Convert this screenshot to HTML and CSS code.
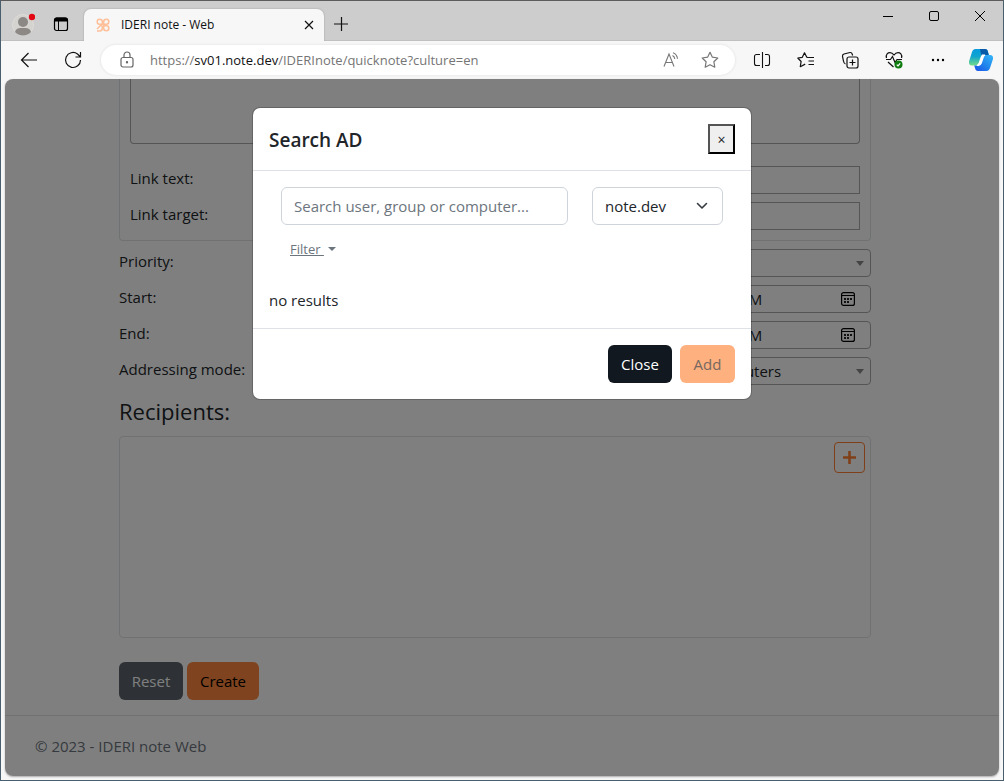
FILE: index.html
```html
<!DOCTYPE html>
<html lang="en">
<head>
<meta charset="utf-8">
<title>IDERI note - Web</title>
<link rel="stylesheet" href="styles.css">
</head>
<body>
<div class="window">
  <header class="titlebar">
    <button class="profile" aria-label="Profile">
      <svg width="24" height="24" viewBox="0 0 24 24"><circle cx="12" cy="13" r="10.500" fill="#d5d3d0" stroke="#dedcd8"/><circle cx="12" cy="10" r="5" fill="#8b8886"/><path d="M4 20c1-4 4-4 8-4s7 0 8 4c-2 2-4.500 3.500-8 3.500S6 22 4 20z" fill="#8b8886"/><circle cx="21" cy="5" r="3.200" fill="#e30613"/></svg>
    </button>
    <button class="tabmenu" aria-label="Tab actions">
      <svg width="16" height="16" viewBox="0 0 16 16" fill="none" stroke="#000"><rect x="1.500" y="2" width="13" height="12.500" rx="2" stroke-width="1.200"/><path d="M1.500 5V4a2 2 0 0 1 2-2h9a2 2 0 0 1 2 2v1z" fill="#000"/><path d="M5.500 5v9"/></svg>
    </button>
    <div class="tab">
      <svg width="16" height="16" viewBox="0 0 16 16" fill="none" stroke="#ffbf98" stroke-width="1.500"><path d="M7.300 7.300H4.500q-2.300 0-2.300-2.500T4.500 2.300q2.800 0 2.800 2.500zM8.700 7.300V4.800q0-2.500 2.800-2.500 2.300 0 2.300 2.500t-2.300 2.500zM8.700 8.700h2.800q2.300 0 2.300 2.500t-2.300 2.500q-2.800 0-2.800-2.500zM7.300 8.700v2.500q0 2.800-2.800 2.800H2M2 12l3.300-3.300h2"/></svg>
      <span class="tab-title">IDERI note - Web</span>
      <button class="tab-close" aria-label="Close tab"><svg width="10" height="10" viewBox="0 0 10 10" stroke="#111" stroke-width="1.200"><path d="M1 1l8 8M9 1L1 9"/></svg></button>
    </div>
    <button class="newtab" aria-label="New tab"><svg width="16" height="16" viewBox="0 0 16 16" stroke="#111" stroke-width="1.200"><path d="M8.500 1v14M1 8h14"/></svg></button>
    <div class="winctl">
      <button aria-label="Minimize"><svg width="12" height="12" viewBox="0 0 12 12" stroke="#000"><path d="M1 6.500h10"/></svg></button>
      <button aria-label="Maximize"><svg width="12" height="12" viewBox="0 0 12 12" fill="none" stroke="#000"><rect x="1.500" y="1.500" width="9" height="9" rx="1.500"/></svg></button>
      <button aria-label="Close window"><svg width="12" height="12" viewBox="0 0 12 12" stroke="#000"><path d="M1 1l10 10M11 1L1 11"/></svg></button>
    </div>
  </header>

  <nav class="toolbar">
    <button aria-label="Back"><svg width="18" height="18" viewBox="0 0 18 18" fill="none" stroke="#111" stroke-width="1.200"><path d="M17 9H1.500M8.500 2l-7 7 7 7"/></svg></button>
    <button aria-label="Refresh"><svg width="18" height="18" viewBox="0 0 18 18" fill="none" stroke="#111" stroke-width="1.200"><path d="M16.500 9A7.500 7.500 0 1 1 13.500 3L16 5.500M16.500 1v5h-5"/></svg></button>
    <div class="address">
      <svg width="16" height="18" viewBox="0 0 16 18" fill="none" stroke="#666" stroke-width="1.200"><rect x="2" y="6.500" width="12" height="9.500" rx="2"/><path d="M5 6.500V4a3 3 0 0 1 6 0v2.500"/><circle cx="8" cy="11.300" r=".6" fill="#666"/></svg>
      <span class="url">https://<b>sv01.note.dev</b>/IDERInote/quicknote?culture=en</span>
      <button aria-label="Read aloud"><svg width="18" height="18" viewBox="0 0 18 18" fill="none" stroke="#777" stroke-width="1.100"><path d="M2 15.500L7 3l5 12.500M3.800 11.500h6.400M10.500 4.500q2 1 2.300 3.500M11 1.800q4 1.500 4.500 6"/></svg></button>
      <button aria-label="Favorite"><svg width="18" height="18" viewBox="0 0 18 18" fill="none" stroke="#777" stroke-width="1.200" stroke-linejoin="round"><path d="M9 1.300l2.400 4.900 5.400.8-3.900 3.800.9 5.400L9 13.700l-4.800 2.500.9-5.400L1.200 7l5.400-.8z"/></svg></button>
    </div>
    <div class="tools">
      <button aria-label="Split screen"><svg width="18" height="18" viewBox="0 0 18 18" fill="none" stroke="#111" stroke-width="1.100"><path d="M9.500 1v16M7 3.500H3.500a2 2 0 0 0-2 2v7a2 2 0 0 0 2 2H7M12 3.500h2.500a2 2 0 0 1 2 2v7a2 2 0 0 1-2 2H12"/></svg></button>
      <button aria-label="Favorites"><svg width="18" height="18" viewBox="0 0 18 18" fill="none" stroke="#111" stroke-width="1.200" stroke-linejoin="round"><path d="M10.500 6.500H17M11.500 10H17M11.500 13.500H17M10.500 6.300l-.7-.1L7.500 1.800 5.300 6.300l-4.500.7 3.300 3.500-.8 5.200 4.900-2.600"/></svg></button>
      <button aria-label="Collections"><svg width="18" height="18" viewBox="0 0 18 18" fill="none" stroke="#111" stroke-width="1.200"><rect x="6" y="6" width="11" height="11" rx="2"/><path d="M11.500 8.500v6M8.500 11.500h6M4.500 13C3 12.500 2.700 11.500 2.500 10L1.500 5.500q-.3-2 1.500-2.500L9 1.500q1.800-.2 2.200 1.500l.4 1.500"/></svg></button>
      <button aria-label="Browser essentials"><svg width="18" height="18" viewBox="0 0 18 18" fill="none" stroke="#111" stroke-width="1.200"><path d="M1.500 7C.5 3 3 1.700 5 1.700c2 0 3 1 4 2.300 1-1.300 2-2.300 4-2.300 2 0 4.500 1.300 3.500 5.300M1 8.500h4.500l2-3 2.500 6 2-3h5M3 11l5.500 5"/><circle cx="13.500" cy="13.500" r="4" fill="#107c10" stroke="none"/><path d="M11.800 13.600l1.200 1.200 2.200-2.500" stroke="#fff"/></svg></button>
      <button aria-label="More"><svg width="18" height="18" viewBox="0 0 18 18" fill="#000"><circle cx="4" cy="9" r="1.200"/><circle cx="9" cy="9" r="1.200"/><circle cx="14" cy="9" r="1.200"/></svg></button>
      <button class="copilot" aria-label="Copilot"><svg width="26" height="26" viewBox="0 0 26 26"><defs><linearGradient id="ca" x1="0" y1="0" x2="0" y2="1"><stop offset="0" stop-color="#099adf"/><stop offset=".45" stop-color="#10a4cf"/><stop offset="1" stop-color="#74dc87"/></linearGradient><linearGradient id="cb" x1="1" y1="0" x2="0" y2="1"><stop offset="0" stop-color="#35b7f7"/><stop offset=".5" stop-color="#2187ed"/><stop offset="1" stop-color="#1a50e8"/></linearGradient></defs><path d="M7.500 2H17q2.500 0 3 3l.8 3h-4.300q-2 0-2.800 2L11 16.500q-.8 2-3 2H4q-3.500 0-3-4L4 5Q5 2 7.500 2z" fill="url(#ca)"/><path d="M12 2h5q2.500 0 3 3l.8 3h-4.300q-2 0-2.800 2z" fill="#075aa7"/><path d="M18.500 24H10q-2.500 0-3-3l-.8-2.500H9q2 0 2.800-2L15 10q.8-2 2.500-2H22q3.500 0 3 4l-3 9q-1 3-3.500 3z" fill="url(#cb)"/><path d="M14.300 8H17q-1.300.7-1.800 2.200l-2 6q-.7 2.300-2.800 2.300H9q1.700-.5 2.300-2.500l2-6z" fill="#fff" stroke="#fff" stroke-width="1.200"/></svg></button>
    </div>
  </nav>

  <div class="viewport">
    <main class="page">
      <form class="form">
        <section class="card">
          <textarea class="message" aria-label="Message"></textarea>
          <div class="row"><label for="lt">Link text:</label><input class="field square" id="lt" type="text"></div>
          <div class="row"><label for="lg">Link target:</label><input class="field square" id="lg" type="text"></div>
        </section>
        <div class="row"><label for="pr">Priority:</label><span class="picker"><select class="field" id="pr"><option></option></select></span></div>
        <div class="row"><label for="st">Start:</label><span class="date"><input class="field" id="st" type="text" value="1/12/2023 1:00 PM"><svg width="14" height="14" viewBox="0 0 14 14"><use href="#cal"/></svg></span></div>
        <div class="row"><label for="en">End:</label><span class="date"><input class="field" id="en" type="text" value="1/13/2023 1:00 PM"><svg width="14" height="14" viewBox="0 0 14 14"><use href="#cal"/></svg></span></div>
        <div class="row"><label for="am">Addressing mode:</label><span class="picker"><select class="field" id="am"><option>Users and computers</option></select></span></div>
        <h2 class="heading">Recipients:</h2>
        <section class="recipients">
          <button type="button" class="plus" aria-label="Add recipient"><svg width="13" height="13" viewBox="0 0 13 13" stroke="#ff7f32" stroke-width="2.600"><path d="M6.500 0v13M0 6.500h13"/></svg></button>
        </section>
        <div class="actions"><button type="button" class="btn reset">Reset</button><button type="button" class="btn create">Create</button></div>
      </form>
      <footer class="footer">© 2023 - IDERI note Web</footer>
    </main>
    <div class="backdrop">
      <section class="modal" role="dialog" aria-labelledby="mt">
        <header class="modal-header"><h1 class="modal-title" id="mt">Search AD</h1><button class="dismiss" aria-label="Close dialog">×</button></header>
        <div class="modal-body">
          <div class="search">
            <input class="control" type="text" placeholder="Search user, group or computer..." aria-label="Search">
            <span class="domain"><select class="control" aria-label="Domain"><option>note.dev</option></select><svg width="12" height="12" viewBox="0 0 12 12" fill="none" stroke="#343a40" stroke-width="1.600" stroke-linecap="round" stroke-linejoin="round"><path d="M1.500 3.500L6 8l4.500-4.500"/></svg></span>
          </div>
          <button class="filter"><u>Filter&nbsp;</u></button>
          <p class="results">no results</p>
        </div>
        <footer class="modal-footer"><button class="btn close">Close</button><button class="btn add" disabled>Add</button></footer>
      </section>
    </div>
  </div>
</div>
<svg class="symbols" width="0" height="0"><symbol id="cal" viewBox="0 0 14 14"><rect x=".6" y=".6" width="12.800" height="12.800" rx="2" fill="none" stroke="#000" stroke-width="1.200"/><path d="M1 3.500h12" stroke="#000"/><path d="M3 6h2v2H3zM6 6h2v2H6zM9 6h2v2H9zM3 9h2v2H3zM6 9h2v2H6z" fill="#222"/></symbol></svg>
</body>
</html>
```
FILE: styles.css
```css
* { box-sizing: border-box; }
body {
  margin: 0;
  font: 15px/24px "Segoe UI", "Open Sans", sans-serif;
  color: #212529;
}
button, input, select, textarea { font: inherit; color: inherit; }
button { padding: 0; border: 0; background: none; }
svg { display: block; flex: none; }
.symbols { position: absolute; }

.window {
  display: flex;
  flex-direction: column;
  height: 100vh;
  border: 1px solid #4a5f6e;
  border-top-color: #5d5b5d;
  background: #f7f7f7;
  overflow: hidden;
}

.titlebar {
  display: flex;
  align-items: flex-end;
  height: 40px;
  background: #cdcdcd;
  border-bottom: 1px solid #c0c0c0;
}
.titlebar > button { display: grid; place-items: center; height: 32px; }
.profile { width: 44px; }
.tabmenu { width: 32px; margin-right: 7px; }
.tab {
  display: flex;
  align-items: center;
  width: 240px;
  height: 32px;
  margin-bottom: -1px;
  padding: 0 10px 0 11px;
  gap: 10px;
  border-radius: 7px 7px 0 0;
  background: #f7f7f7;
  box-shadow: 0 0 2px #999;
  clip-path: inset(-3px -3px 0 -3px);
}
.tab-title { flex: 1; font-size: 12px; color: #111; }
.newtab { width: 34px; }
.winctl { display: flex; align-self: flex-start; margin-left: auto; }
.winctl button { display: grid; place-items: center; width: 46px; height: 30px; }

.toolbar {
  display: flex;
  align-items: center;
  height: 38px;
  padding: 0 2px 0 6px;
}
.toolbar button { display: grid; place-items: center; width: 44px; height: 30px; }
.address {
  display: flex;
  flex: 1;
  align-items: center;
  min-width: 0;
  height: 30px;
  margin: 0 5px 0 6px;
  padding: 0 6px 0 18px;
  border-radius: 15px;
  background: #fff;
  box-shadow: 0 0 3px #ddd;
}
.url {
  flex: 1;
  min-width: 0;
  margin-left: 15px;
  overflow: hidden;
  font-size: 13px;
  white-space: nowrap;
  color: #757575;
}
.url b { font-weight: 400; color: #111; }
.address button { width: 39px; }
.tools { display: flex; }
.toolbar .copilot { width: 41px; }

.viewport {
  position: relative;
  flex: 1;
  min-height: 0;
  margin: 0 4px 4px;
  overflow: hidden;
  border-radius: 8px;
  background: #fff;
  box-shadow: 0 1px 2px #aaa;
}
.page { display: flex; flex-direction: column; height: 100%; }
.form {
  display: flex;
  flex-direction: column;
  gap: 8px;
  width: calc(100% - 242px);
  margin-left: 114px;
}
.card {
  display: flex;
  flex-direction: column;
  gap: 8px;
  padding: 0 10px 10px;
  border: 1px solid #dee2e6;
  border-top: 0;
  border-radius: 0 0 4px 4px;
}
.message {
  width: 100%;
  height: 65px;
  margin-bottom: 14px;
  border: 1px solid #aaa;
  border-top: 0;
  border-radius: 0 0 4px 4px;
  resize: none;
}
.row { display: grid; grid-template-columns: 2fr 1fr; height: 28px; }
.field {
  width: 100%;
  height: 28px;
  padding: 0 10px;
  border: 1px solid #aaa;
  border-radius: 4px;
  background: #fff;
  appearance: none;
}
.square { border-radius: 0; }
.picker, .date { position: relative; }
.picker::after {
  content: "";
  position: absolute;
  top: 12px;
  right: 7px;
  border: 4px solid transparent;
  border-top: 5px solid #888;
  border-bottom: 0;
}
.date svg { position: absolute; top: 7px; right: 16px; }
.heading { margin: 3px 0 0; font-size: 22px; line-height: 30px; font-weight: 400; }
.recipients {
  display: flex;
  justify-content: flex-end;
  height: 202px;
  margin-top: 2px;
  padding: 5px;
  border: 1px solid #dee2e6;
  border-radius: 4px;
}
.plus {
  display: grid;
  place-items: center;
  width: 31px;
  height: 31px;
  border: 1px solid #ff7f32;
  border-radius: 4px;
}
.actions { display: flex; gap: 4px; margin-top: 16px; }
.btn { height: 38px; padding: 0 12px; border-radius: 6px; }
.reset { width: 64px; background: #5c656c; color: #fff; }
.create { width: 72px; background: #ff883f; color: #000; }
.footer {
  flex: 1;
  margin-top: 15px;
  padding: 18px 30px;
  border-top: 1px solid #dee2e6;
  color: #6c757d;
}

.backdrop {
  position: absolute;
  inset: 0;
  padding-top: 28px;
  background: rgba(0, 0, 0, 0.5);
}
.modal {
  width: 500px;
  max-width: 100%;
  margin: 0 auto;
  border: 1px solid rgba(0, 0, 0, 0.2);
  border-radius: 8px;
  background: #fff;
  background-clip: padding-box;
}
.modal-header {
  display: flex;
  align-items: center;
  justify-content: space-between;
  padding: 16px;
  border-bottom: 1px solid #dee2e6;
}
.modal-title { margin: 0; font-size: 19px; line-height: 32px; height: 30px; font-weight: 600; }
.dismiss {
  width: 27px;
  height: 30px;
  padding-top: 2px;
  border: 2px outset #000;
  background: #efefef;
  font-size: 14px;
}
.modal-body { padding: 16px; }
.search {
  display: grid;
  grid-template-columns: 287fr 131fr;
  gap: 24px;
  padding: 0 12px;
}
.control {
  width: 100%;
  height: 38px;
  padding: 0 12px;
  border: 1px solid #ced4da;
  border-radius: 6px;
  background: #fff;
  appearance: none;
}
.control::placeholder { color: #6c757d; opacity: 1; }
.domain { position: relative; }
.domain svg { position: absolute; top: 13px; right: 15px; }
.filter {
  display: flex;
  align-items: center;
  gap: 4px;
  height: 31px;
  margin: 8px 0 0 21px;
  font-size: 13px;
  color: #6c757d;
}
.filter::after {
  content: "";
  border: 4px solid transparent;
  border-top-color: #6c757d;
  border-bottom: 0;
}
.results { margin: 24px 0 0; }
.modal-footer {
  display: flex;
  justify-content: flex-end;
  gap: 8px;
  padding: 16px;
  border-top: 1px solid #dee2e6;
}
.close { width: 64px; background: #111820; color: #fff; }
.add { width: 55px; background: #ffb07f; color: #76685f; }
```
